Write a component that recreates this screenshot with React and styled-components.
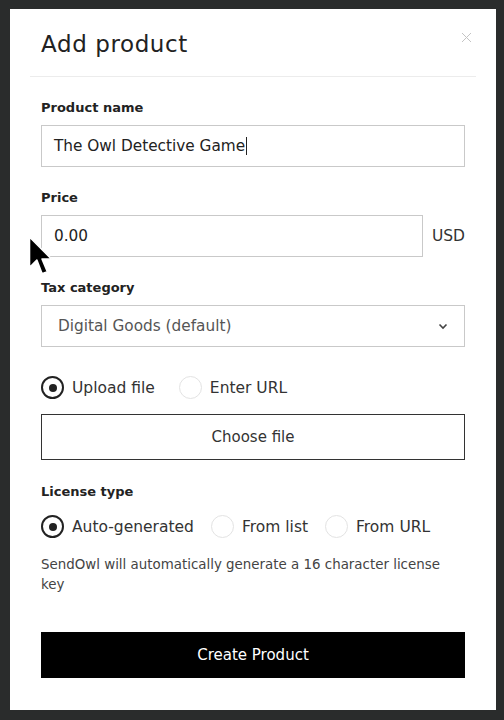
import React from 'react';
import styled, { createGlobalStyle } from 'styled-components';

const GlobalStyle = createGlobalStyle`
  html, body {
    margin: 0;
    padding: 0;
    background: #2a2c2c;
  }
  body {
    font-family: "DejaVu Sans", "Open Sans", sans-serif;
  }
`;

const Backdrop = styled.div`
  width: 504px;
  height: 720px;
  box-sizing: border-box;
  padding: 9px 8px 10px 10px;
  position: relative;
`;

const Modal = styled.div`
  background: #fff;
  height: 701px;
  box-sizing: border-box;
  padding: 0 20px;
`;

const Header = styled.div`
  display: flex;
  justify-content: space-between;
  align-items: flex-start;
  padding: 22px 4px 0 11px;
  height: 68px;
  box-sizing: border-box;
  border-bottom: 1px solid #ececec;
`;

const Title = styled.h1`
  margin: 0;
  font-size: 23px;
  font-weight: 400;
  color: #222;
  letter-spacing: 0.6px;
`;

const Close = styled.svg`
  margin-top: 1px;
`;

const Body = styled.div`
  padding: 23px 11px 0 11px;
  display: flex;
  flex-direction: column;
`;

const Label = styled.div`
  font-size: 13px;
  font-weight: 700;
  color: #222;
  margin-bottom: ${({ $gap }) => $gap || 9}px;
  line-height: 16px;
`;

const Field = styled.div`
  margin-bottom: ${({ $gap }) => $gap || 23}px;
`;

const InputRow = styled.div`
  display: flex;
  align-items: center;
  gap: 9px;
`;

const TextBox = styled.div`
  flex: 1;
  height: 42px;
  box-sizing: border-box;
  border: 1px solid #c9c9c9;
  display: flex;
  align-items: center;
  padding-left: ${({ $pad }) => $pad || 12}px;
  padding-right: 16px;
  font-size: 15.3px;
  color: ${({ $muted }) => ($muted ? '#555' : '#222')};
  justify-content: space-between;
`;

const Caret = styled.span`
  display: inline-block;
  width: 1px;
  height: 18px;
  background: #222;
  margin-left: 1px;
  vertical-align: middle;
`;

const Unit = styled.span`
  font-size: 15.5px;
  color: #333;
`;

const RadioRow = styled.div`
  display: flex;
  align-items: center;
  gap: ${({ $spread }) => $spread || 17}px;
  margin-bottom: ${({ $gap }) => $gap || 16}px;
`;

const RadioItem = styled.label`
  display: flex;
  align-items: center;
  gap: 8px;
  font-size: 15.5px;
  color: #333;
`;

const Circle = styled.span`
  width: 23px;
  height: 23px;
  box-sizing: border-box;
  border-radius: 50%;
  border: ${({ $on }) => ($on ? '2px solid #222' : '1px solid #e3e3e3')};
  display: flex;
  align-items: center;
  justify-content: center;
  &::after {
    content: '';
    display: ${({ $on }) => ($on ? 'block' : 'none')};
    width: 8px;
    height: 8px;
    border-radius: 50%;
    background: #222;
  }
`;

const OutlineButton = styled.button`
  height: 46px;
  border: 1.5px solid #333;
  background: #fff;
  font-family: inherit;
  font-size: 15px;
  color: #333;
  margin-bottom: 24px;
`;

const Help = styled.p`
  margin: 0 0 37px 0;
  max-width: 410px;
  font-size: 13.4px;
  line-height: 20px;
  color: #444;
`;

const PrimaryButton = styled.button`
  height: 46px;
  border: none;
  background: #000;
  color: #fff;
  font-family: inherit;
  font-size: 15px;
`;

const Pointer = styled.svg`
  position: absolute;
  left: 27px;
  top: 236px;
`;

const Radio = ({ on, children }) => (
  <RadioItem>
    <Circle $on={on} />
    {children}
  </RadioItem>
);

const Chevron = () => (
  <svg width="10" height="7" viewBox="0 0 10 7">
    <path d="M1.5 1.5 L5 5 L8.5 1.5" fill="none" stroke="#444" strokeWidth="1.6" />
  </svg>
);

export default function App() {
  return (
    <>
      <GlobalStyle />
      <Backdrop>
        <Modal>
          <Header>
            <Title>Add product</Title>
            <Close width="11" height="11" viewBox="0 0 11 11">
              <path d="M1 1 L10 10 M10 1 L1 10" stroke="#c4c4c4" strokeWidth="1" />
            </Close>
          </Header>
          <Body>
            <Field>
              <Label>Product name</Label>
              <InputRow>
                <TextBox>
                  <span>The Owl Detective Game<Caret /></span>
                </TextBox>
              </InputRow>
            </Field>
            <Field>
              <Label>Price</Label>
              <InputRow>
                <TextBox>0.00</TextBox>
                <Unit>USD</Unit>
              </InputRow>
            </Field>
            <Field $gap={29}>
              <Label>Tax category</Label>
              <TextBox $muted $pad={16}>
                <span>Digital Goods (default)</span>
                <Chevron />
              </TextBox>
            </Field>
            <RadioRow $gap={15} $spread={24}>
              <Radio on>Upload file</Radio>
              <Radio>Enter URL</Radio>
            </RadioRow>
            <OutlineButton>Choose file</OutlineButton>
            <Label $gap={15}>License type</Label>
            <RadioRow $gap={17}>
              <Radio on>Auto-generated</Radio>
              <Radio>From list</Radio>
              <Radio>From URL</Radio>
            </RadioRow>
            <Help>SendOwl will automatically generate a 16 character license key</Help>
            <PrimaryButton>Create Product</PrimaryButton>
          </Body>
        </Modal>
        <Pointer width="26" height="42" viewBox="0 0 24 40">
          <path d="M2 1 L2 30 L9 23 L14 36 L19 34 L14 22 L23 22 Z" fill="#000" stroke="#fff" strokeWidth="1.5" strokeLinejoin="round" />
        </Pointer>
      </Backdrop>
    </>
  );
}
